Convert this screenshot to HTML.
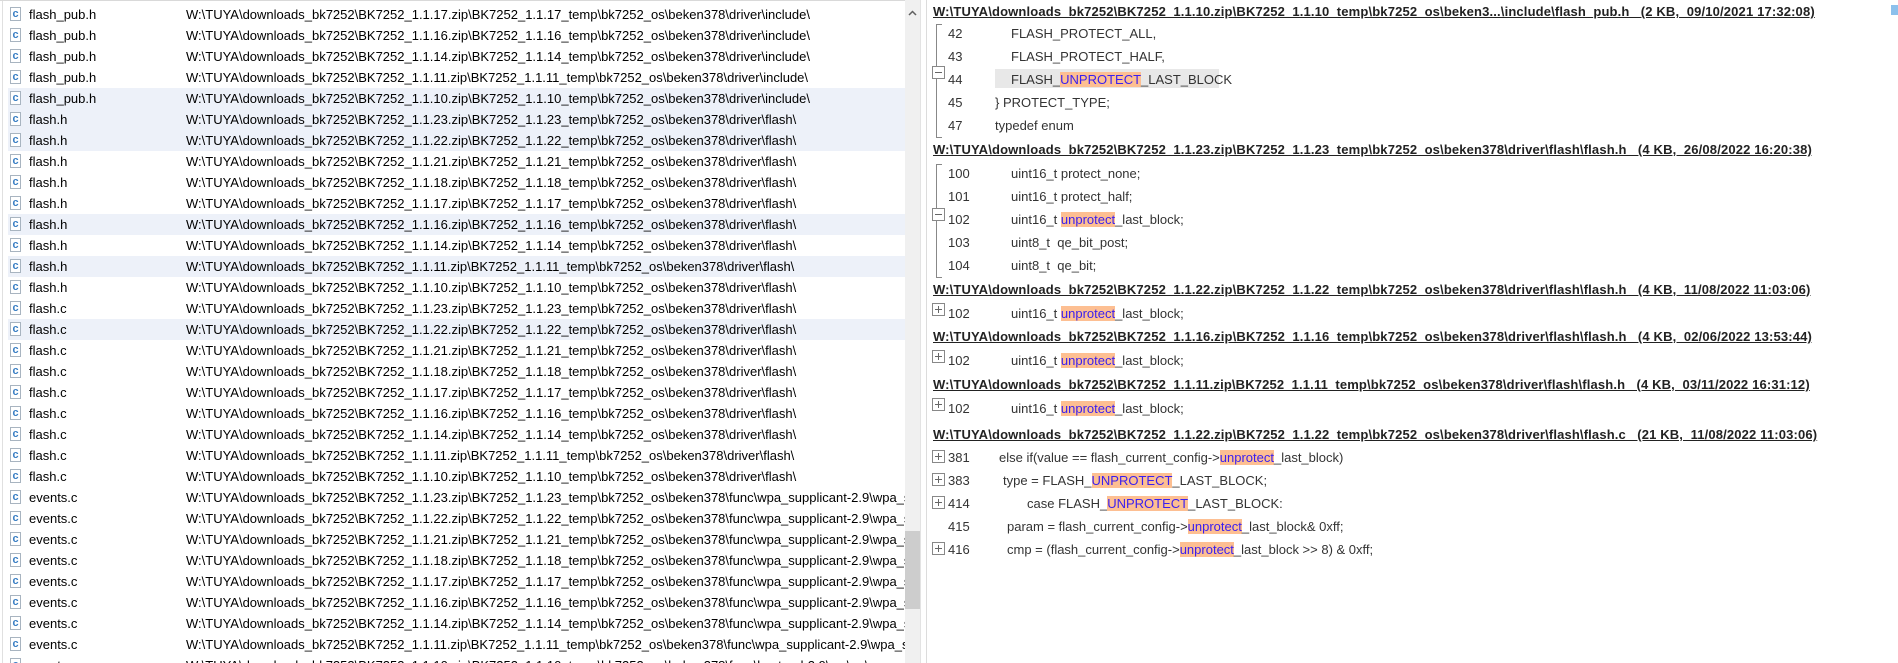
<!DOCTYPE html>
<html><head><meta charset="utf-8"><style>
*{margin:0;padding:0;box-sizing:border-box}
body{width:1898px;height:663px;overflow:hidden;background:#fff;position:relative;font-family:"Liberation Sans",sans-serif;font-size:13px;color:#000}
#left{position:absolute;left:0;top:0;width:905px;height:663px;overflow:hidden;border-top:1px solid #d9d9d9}
#left:before{content:"";position:absolute;left:2px;top:0;width:1px;height:663px;background:#e0e0e0}
.r{position:absolute;left:8px;width:897px;height:21px;line-height:21px;white-space:pre}
.r.s{background:#edf1f9}
.r i{position:absolute;left:2px;top:3px;width:11px;height:14px;border:1px solid #a8b4c0;background:#fff;font-style:normal;font-size:11px;line-height:12px;text-align:center;color:#3a7fc4;font-weight:bold}
.r .n{position:absolute;left:21px}
.r .p{position:absolute;left:178px;letter-spacing:0}
#sb{position:absolute;left:905px;top:0;width:15px;height:663px;background:#f0f0f0}
#thumb{position:absolute;left:905px;top:531px;width:15px;height:78px;background:#cdcdcd}
#split{position:absolute;left:920px;top:0;width:10px;height:663px;background:#fff;border-left:1px solid #e3e3e3}
#split:after{content:"";position:absolute;left:5px;top:0;width:1px;height:663px;background:#dcdcdc}
.h,.c{position:absolute;left:933px;white-space:pre;color:#333}
.h{font-weight:bold;text-decoration:underline;font-size:13px;height:24px;line-height:24px;letter-spacing:0.15px;color:#222}
.c{height:23px;line-height:23px;left:948px;width:900px}
.c .t{position:absolute;top:0}
.hl{background:#fdbf92;color:#3a1ef0}
.box{position:absolute;width:13px;height:13px;border:1px solid #888;background:#fff;left:932px}
.box:before{content:"";position:absolute;left:2px;top:5px;width:7px;height:1px;background:#666}
.box.p:after{content:"";position:absolute;left:5px;top:2px;width:1px;height:7px;background:#666}
.br{position:absolute;left:936px;width:6px;border-left:1px solid #888;border-top:1px solid #888;border-bottom:1px solid #888}
</style></head><body>
<div id="left">
<div class="r" style="top:3px"><i>c</i><span class="n">flash_pub.h</span><span class="p">W:\TUYA\downloads_bk7252\BK7252_1.1.17.zip\BK7252_1.1.17_temp\bk7252_os\beken378\driver\include\</span></div>
<div class="r" style="top:24px"><i>c</i><span class="n">flash_pub.h</span><span class="p">W:\TUYA\downloads_bk7252\BK7252_1.1.16.zip\BK7252_1.1.16_temp\bk7252_os\beken378\driver\include\</span></div>
<div class="r" style="top:45px"><i>c</i><span class="n">flash_pub.h</span><span class="p">W:\TUYA\downloads_bk7252\BK7252_1.1.14.zip\BK7252_1.1.14_temp\bk7252_os\beken378\driver\include\</span></div>
<div class="r" style="top:66px"><i>c</i><span class="n">flash_pub.h</span><span class="p">W:\TUYA\downloads_bk7252\BK7252_1.1.11.zip\BK7252_1.1.11_temp\bk7252_os\beken378\driver\include\</span></div>
<div class="r s" style="top:87px"><i>c</i><span class="n">flash_pub.h</span><span class="p">W:\TUYA\downloads_bk7252\BK7252_1.1.10.zip\BK7252_1.1.10_temp\bk7252_os\beken378\driver\include\</span></div>
<div class="r s" style="top:108px"><i>c</i><span class="n">flash.h</span><span class="p">W:\TUYA\downloads_bk7252\BK7252_1.1.23.zip\BK7252_1.1.23_temp\bk7252_os\beken378\driver\flash\</span></div>
<div class="r s" style="top:129px"><i>c</i><span class="n">flash.h</span><span class="p">W:\TUYA\downloads_bk7252\BK7252_1.1.22.zip\BK7252_1.1.22_temp\bk7252_os\beken378\driver\flash\</span></div>
<div class="r" style="top:150px"><i>c</i><span class="n">flash.h</span><span class="p">W:\TUYA\downloads_bk7252\BK7252_1.1.21.zip\BK7252_1.1.21_temp\bk7252_os\beken378\driver\flash\</span></div>
<div class="r" style="top:171px"><i>c</i><span class="n">flash.h</span><span class="p">W:\TUYA\downloads_bk7252\BK7252_1.1.18.zip\BK7252_1.1.18_temp\bk7252_os\beken378\driver\flash\</span></div>
<div class="r" style="top:192px"><i>c</i><span class="n">flash.h</span><span class="p">W:\TUYA\downloads_bk7252\BK7252_1.1.17.zip\BK7252_1.1.17_temp\bk7252_os\beken378\driver\flash\</span></div>
<div class="r s" style="top:213px"><i>c</i><span class="n">flash.h</span><span class="p">W:\TUYA\downloads_bk7252\BK7252_1.1.16.zip\BK7252_1.1.16_temp\bk7252_os\beken378\driver\flash\</span></div>
<div class="r" style="top:234px"><i>c</i><span class="n">flash.h</span><span class="p">W:\TUYA\downloads_bk7252\BK7252_1.1.14.zip\BK7252_1.1.14_temp\bk7252_os\beken378\driver\flash\</span></div>
<div class="r s" style="top:255px"><i>c</i><span class="n">flash.h</span><span class="p">W:\TUYA\downloads_bk7252\BK7252_1.1.11.zip\BK7252_1.1.11_temp\bk7252_os\beken378\driver\flash\</span></div>
<div class="r" style="top:276px"><i>c</i><span class="n">flash.h</span><span class="p">W:\TUYA\downloads_bk7252\BK7252_1.1.10.zip\BK7252_1.1.10_temp\bk7252_os\beken378\driver\flash\</span></div>
<div class="r" style="top:297px"><i>c</i><span class="n">flash.c</span><span class="p">W:\TUYA\downloads_bk7252\BK7252_1.1.23.zip\BK7252_1.1.23_temp\bk7252_os\beken378\driver\flash\</span></div>
<div class="r s" style="top:318px"><i>c</i><span class="n">flash.c</span><span class="p">W:\TUYA\downloads_bk7252\BK7252_1.1.22.zip\BK7252_1.1.22_temp\bk7252_os\beken378\driver\flash\</span></div>
<div class="r" style="top:339px"><i>c</i><span class="n">flash.c</span><span class="p">W:\TUYA\downloads_bk7252\BK7252_1.1.21.zip\BK7252_1.1.21_temp\bk7252_os\beken378\driver\flash\</span></div>
<div class="r" style="top:360px"><i>c</i><span class="n">flash.c</span><span class="p">W:\TUYA\downloads_bk7252\BK7252_1.1.18.zip\BK7252_1.1.18_temp\bk7252_os\beken378\driver\flash\</span></div>
<div class="r" style="top:381px"><i>c</i><span class="n">flash.c</span><span class="p">W:\TUYA\downloads_bk7252\BK7252_1.1.17.zip\BK7252_1.1.17_temp\bk7252_os\beken378\driver\flash\</span></div>
<div class="r" style="top:402px"><i>c</i><span class="n">flash.c</span><span class="p">W:\TUYA\downloads_bk7252\BK7252_1.1.16.zip\BK7252_1.1.16_temp\bk7252_os\beken378\driver\flash\</span></div>
<div class="r" style="top:423px"><i>c</i><span class="n">flash.c</span><span class="p">W:\TUYA\downloads_bk7252\BK7252_1.1.14.zip\BK7252_1.1.14_temp\bk7252_os\beken378\driver\flash\</span></div>
<div class="r" style="top:444px"><i>c</i><span class="n">flash.c</span><span class="p">W:\TUYA\downloads_bk7252\BK7252_1.1.11.zip\BK7252_1.1.11_temp\bk7252_os\beken378\driver\flash\</span></div>
<div class="r" style="top:465px"><i>c</i><span class="n">flash.c</span><span class="p">W:\TUYA\downloads_bk7252\BK7252_1.1.10.zip\BK7252_1.1.10_temp\bk7252_os\beken378\driver\flash\</span></div>
<div class="r" style="top:486px"><i>c</i><span class="n">events.c</span><span class="p">W:\TUYA\downloads_bk7252\BK7252_1.1.23.zip\BK7252_1.1.23_temp\bk7252_os\beken378\func\wpa_supplicant-2.9\wpa_supplicant\</span></div>
<div class="r" style="top:507px"><i>c</i><span class="n">events.c</span><span class="p">W:\TUYA\downloads_bk7252\BK7252_1.1.22.zip\BK7252_1.1.22_temp\bk7252_os\beken378\func\wpa_supplicant-2.9\wpa_supplicant\</span></div>
<div class="r" style="top:528px"><i>c</i><span class="n">events.c</span><span class="p">W:\TUYA\downloads_bk7252\BK7252_1.1.21.zip\BK7252_1.1.21_temp\bk7252_os\beken378\func\wpa_supplicant-2.9\wpa_supplicant\</span></div>
<div class="r" style="top:549px"><i>c</i><span class="n">events.c</span><span class="p">W:\TUYA\downloads_bk7252\BK7252_1.1.18.zip\BK7252_1.1.18_temp\bk7252_os\beken378\func\wpa_supplicant-2.9\wpa_supplicant\</span></div>
<div class="r" style="top:570px"><i>c</i><span class="n">events.c</span><span class="p">W:\TUYA\downloads_bk7252\BK7252_1.1.17.zip\BK7252_1.1.17_temp\bk7252_os\beken378\func\wpa_supplicant-2.9\wpa_supplicant\</span></div>
<div class="r" style="top:591px"><i>c</i><span class="n">events.c</span><span class="p">W:\TUYA\downloads_bk7252\BK7252_1.1.16.zip\BK7252_1.1.16_temp\bk7252_os\beken378\func\wpa_supplicant-2.9\wpa_supplicant\</span></div>
<div class="r" style="top:612px"><i>c</i><span class="n">events.c</span><span class="p">W:\TUYA\downloads_bk7252\BK7252_1.1.14.zip\BK7252_1.1.14_temp\bk7252_os\beken378\func\wpa_supplicant-2.9\wpa_supplicant\</span></div>
<div class="r" style="top:633px"><i>c</i><span class="n">events.c</span><span class="p">W:\TUYA\downloads_bk7252\BK7252_1.1.11.zip\BK7252_1.1.11_temp\bk7252_os\beken378\func\wpa_supplicant-2.9\wpa_supplicant\</span></div>
<div class="r" style="top:654px"><i>c</i><span class="n">events.c</span><span class="p">W:\TUYA\downloads_bk7252\BK7252_1.1.10.zip\BK7252_1.1.10_temp\bk7252_os\beken378\func\hostapd-2.9\src\ap\</span></div>
</div>
<div id="sb"><svg width="15" height="20" style="position:absolute;left:0;top:4px"><path d="M4 11 L7.5 7.5 L11 11" stroke="#606060" stroke-width="1.5" fill="none"/></svg></div>
<div id="thumb"></div>
<div id="split"></div>

<div class="h" style="top:0">W:\TUYA\downloads_bk7252\BK7252_1.1.10.zip\BK7252_1.1.10_temp\bk7252_os\beken3...\include\flash_pub.h   (2 KB,  09/10/2021 17:32:08)</div>
<div style="position:absolute;left:1891px;top:5px;width:7px;height:10px;background:#8cc0ec"></div>
<div class="br" style="top:24px;height:114px"></div>
<div class="c" style="top:22px">42<span class="t" style="left:63px">FLASH_PROTECT_ALL,</span></div>
<div class="c" style="top:45px">43<span class="t" style="left:63px">FLASH_PROTECT_HALF,</span></div>
<div style="position:absolute;left:995px;top:69px;width:224px;height:19px;background:#e8e8e8"></div>
<div class="box" style="top:66px"></div>
<div class="c" style="top:68px">44<span class="t" style="left:63px">FLASH_<span class="hl">UNPROTECT</span>_LAST_BLOCK</span></div>
<div class="c" style="top:91px">45<span class="t" style="left:47px">} PROTECT_TYPE;</span></div>
<div class="c" style="top:114px">47<span class="t" style="left:47px">typedef enum</span></div>

<div class="h" style="top:138px">W:\TUYA\downloads_bk7252\BK7252_1.1.23.zip\BK7252_1.1.23_temp\bk7252_os\beken378\driver\flash\flash.h   (4 KB,  26/08/2022 16:20:38)</div>
<div class="br" style="top:164px;height:114px"></div>
<div class="c" style="top:162px">100<span class="t" style="left:63px">uint16_t protect_none;</span></div>
<div class="c" style="top:185px">101<span class="t" style="left:63px">uint16_t protect_half;</span></div>
<div class="box" style="top:208px"></div>
<div class="c" style="top:208px">102<span class="t" style="left:63px">uint16_t <span class="hl">unprotect</span>_last_block;</span></div>
<div class="c" style="top:231px">103<span class="t" style="left:63px">uint8_t  qe_bit_post;</span></div>
<div class="c" style="top:254px">104<span class="t" style="left:63px">uint8_t  qe_bit;</span></div>

<div class="h" style="top:278px">W:\TUYA\downloads_bk7252\BK7252_1.1.22.zip\BK7252_1.1.22_temp\bk7252_os\beken378\driver\flash\flash.h   (4 KB,  11/08/2022 11:03:06)</div>
<div class="box p" style="top:303px"></div>
<div class="c" style="top:302px">102<span class="t" style="left:63px">uint16_t <span class="hl">unprotect</span>_last_block;</span></div>

<div class="h" style="top:325px">W:\TUYA\downloads_bk7252\BK7252_1.1.16.zip\BK7252_1.1.16_temp\bk7252_os\beken378\driver\flash\flash.h   (4 KB,  02/06/2022 13:53:44)</div>
<div class="box p" style="top:350px"></div>
<div class="c" style="top:349px">102<span class="t" style="left:63px">uint16_t <span class="hl">unprotect</span>_last_block;</span></div>

<div class="h" style="top:373px">W:\TUYA\downloads_bk7252\BK7252_1.1.11.zip\BK7252_1.1.11_temp\bk7252_os\beken378\driver\flash\flash.h   (4 KB,  03/11/2022 16:31:12)</div>
<div class="box p" style="top:398px"></div>
<div class="c" style="top:397px">102<span class="t" style="left:63px">uint16_t <span class="hl">unprotect</span>_last_block;</span></div>

<div class="h" style="top:423px">W:\TUYA\downloads_bk7252\BK7252_1.1.22.zip\BK7252_1.1.22_temp\bk7252_os\beken378\driver\flash\flash.c   (21 KB,  11/08/2022 11:03:06)</div>
<div class="box p" style="top:450px"></div>
<div class="c" style="top:446px">381<span class="t" style="left:51px">else if(value == flash_current_config-&gt;<span class="hl">unprotect</span>_last_block)</span></div>
<div class="box p" style="top:473px"></div>
<div class="c" style="top:469px">383<span class="t" style="left:55px">type = FLASH_<span class="hl">UNPROTECT</span>_LAST_BLOCK;</span></div>
<div class="box p" style="top:496px"></div>
<div class="c" style="top:492px">414<span class="t" style="left:79px">case FLASH_<span class="hl">UNPROTECT</span>_LAST_BLOCK:</span></div>
<div class="c" style="top:515px">415<span class="t" style="left:59px">param = flash_current_config-&gt;<span class="hl">unprotect</span>_last_block&amp; 0xff;</span></div>
<div class="box p" style="top:542px"></div>
<div class="c" style="top:538px">416<span class="t" style="left:59px">cmp = (flash_current_config-&gt;<span class="hl">unprotect</span>_last_block &gt;&gt; 8) &amp; 0xff;</span></div>
</body></html>
